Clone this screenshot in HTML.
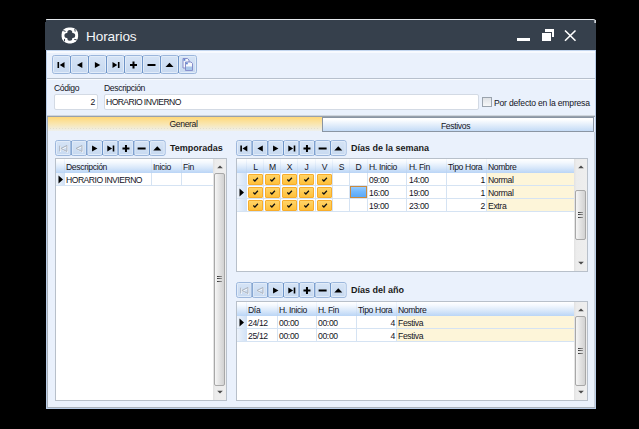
<!DOCTYPE html>
<html><head><meta charset="utf-8">
<style>
*{margin:0;padding:0;box-sizing:border-box}
html,body{width:639px;height:429px;overflow:hidden;background:#000}
body{position:relative;font-family:"Liberation Sans",sans-serif;font-size:8.6px;letter-spacing:-0.35px;color:#14141e}
.a{position:absolute}
.l{position:absolute;white-space:nowrap;line-height:10px}
.b{font-weight:bold;font-size:9px;letter-spacing:0;color:#1a1a1a}
.inp{position:absolute;background:#fff;border:1px solid #d3dae4;border-radius:2px}
.hd{position:absolute;background:linear-gradient(#ffffff 0%,#f3f8fe 25%,#d9e8fa 62%,#bad5f6 100%)}
.vl{position:absolute;width:1px;background:#d5e3f3}
.hl{position:absolute;height:1px;background:#d5e3f3}
</style></head><body>

<div class="a" style="left:46px;top:20px;width:550px;height:389px;background:#eaf1fc;border:1px solid #b9cde8;border-top:none"></div>
<div class="a" style="left:45px;top:19px;width:551px;height:31px;background:#36404c;border-top:1px solid #e4e8ec;border-radius:2px 3px 0 0"></div>
<div class="a" style="left:45px;top:19px;width:1px;height:3px;background:#000"></div>
<div class="a" style="left:594px;top:20px;width:2px;height:3px;background:linear-gradient(90deg,#8a929c,#e4e8ec)"></div>
<svg class="a" style="left:60px;top:26px" width="20" height="19" viewBox="0 0 20 19"><rect x="1.6" y="1.4" width="16.5" height="16" rx="7" fill="#fff"/><path d="M6.9 9.4H12.7M9.8 6.5V12.3" stroke="#37404c" stroke-width="5" stroke-linecap="round"/><path d="M3.2 4.6L5.6 5.4M14.8 3.0L15.2 5.6M4.4 15.4L4.6 12.9M16.6 13.8L14.2 13.4" stroke="#37404c" stroke-width="1"/></svg>
<div class="l" style="left:86px;top:29px;font-size:13.6px;line-height:16px;letter-spacing:-0.1px;color:#f4f6f8">Horarios</div>
<div class="a" style="left:517px;top:38px;width:13px;height:3px;background:#fff"></div>
<div class="a" style="left:545px;top:29px;width:9px;height:8px;background:#fff"></div>
<div class="a" style="left:541px;top:32px;width:11px;height:10px;background:#37404c"></div>
<div class="a" style="left:542px;top:33px;width:9px;height:8px;background:#fff"></div>
<svg class="a" style="left:563px;top:29px" width="14" height="13" viewBox="0 0 14 13"><path d="M2 1.5L12.5 11.8M12.5 1.5L2 11.8" stroke="#fff" stroke-width="1.6"/></svg>
<div class="a" style="left:47px;top:50px;width:548px;height:1px;background:#c3d6ef"></div>
<div class="a" style="left:47px;top:51px;width:548px;height:2px;background:#f7faff"></div>
<svg class="a" style="left:52px;top:55px" width="145" height="19" viewBox="0 0 145 19">
<defs><linearGradient id="g52_55" x1="0" y1="0" x2="0" y2="1"><stop offset="0" stop-color="#d6e4f6"/><stop offset="1" stop-color="#c7d9f0"/></linearGradient></defs>
<rect x="0.5" y="0.5" width="18" height="18" rx="2" fill="url(#g52_55)" stroke="#9cb7dc"/>
<rect x="1.5" y="1.5" width="16" height="16" rx="1" fill="none" stroke="#e2ecf9" stroke-width="1"/>
<rect x="18.5" y="0.5" width="18" height="18" rx="2" fill="url(#g52_55)" stroke="#9cb7dc"/>
<rect x="19.5" y="1.5" width="16" height="16" rx="1" fill="none" stroke="#e2ecf9" stroke-width="1"/>
<rect x="36.5" y="0.5" width="18" height="18" rx="2" fill="url(#g52_55)" stroke="#9cb7dc"/>
<rect x="37.5" y="1.5" width="16" height="16" rx="1" fill="none" stroke="#e2ecf9" stroke-width="1"/>
<rect x="54.5" y="0.5" width="18" height="18" rx="2" fill="url(#g52_55)" stroke="#9cb7dc"/>
<rect x="55.5" y="1.5" width="16" height="16" rx="1" fill="none" stroke="#e2ecf9" stroke-width="1"/>
<rect x="72.5" y="0.5" width="18" height="18" rx="2" fill="url(#g52_55)" stroke="#9cb7dc"/>
<rect x="73.5" y="1.5" width="16" height="16" rx="1" fill="none" stroke="#e2ecf9" stroke-width="1"/>
<rect x="90.5" y="0.5" width="18" height="18" rx="2" fill="url(#g52_55)" stroke="#9cb7dc"/>
<rect x="91.5" y="1.5" width="16" height="16" rx="1" fill="none" stroke="#e2ecf9" stroke-width="1"/>
<rect x="108.5" y="0.5" width="18" height="18" rx="2" fill="url(#g52_55)" stroke="#9cb7dc"/>
<rect x="109.5" y="1.5" width="16" height="16" rx="1" fill="none" stroke="#e2ecf9" stroke-width="1"/>
<rect x="126.5" y="0.5" width="18" height="18" rx="2" fill="url(#g52_55)" stroke="#9cb7dc"/>
<rect x="127.5" y="1.5" width="16" height="16" rx="1" fill="none" stroke="#e2ecf9" stroke-width="1"/>
<rect x="18" y="1" width="1" height="17" fill="#6f95c8"/>
<rect x="36" y="1" width="1" height="17" fill="#6f95c8"/>
<rect x="54" y="1" width="1" height="17" fill="#6f95c8"/>
<rect x="72" y="1" width="1" height="17" fill="#6f95c8"/>
<rect x="90" y="1" width="1" height="17" fill="#6f95c8"/>
<rect x="108" y="1" width="1" height="17" fill="#6f95c8"/>
<rect x="126" y="1" width="1" height="17" fill="#6f95c8"/>
<rect x="5.5" y="7.0" width="1.6" height="6" fill="#000"/><path d="M12.5 7.0L7.7 10.0L12.5 13.0Z" fill="#000"/>
<path d="M30.3 7.0L24.9 10.0L30.3 13.0Z" fill="#000"/>
<path d="M42.9 7.0L48.3 10.0L42.9 13.0Z" fill="#000"/>
<rect x="65.9" y="7.0" width="1.6" height="6" fill="#000"/><path d="M60.5 7.0L65.3 10.0L60.5 13.0Z" fill="#000"/>
<rect x="78.0" y="9.0" width="7" height="2" fill="#000"/><rect x="80.5" y="6.5" width="2" height="7" fill="#000"/>
<rect x="95.5" y="9.0" width="8" height="2" fill="#000"/>
<path d="M113.5 12.0L117.5 7.8L121.5 12.0Z" fill="#000"/>
<path d="M131.0 3.5H135.5 L137.0 5.0V13.0H131.0Z" fill="#f2f6fc" stroke="#7c82c4" stroke-width="0.9"/><rect x="131.5" y="4.0" width="1.8" height="1.8" fill="#5f86d0"/><path d="M133.5 7.0H139.0L140.5 8.5V15.5H133.5Z" fill="#f7f9fd" stroke="#7c82c4" stroke-width="0.9"/><rect x="134.0" y="11.5" width="6" height="3.6" fill="#a8c6ea"/><rect x="134.0" y="7.5" width="1.8" height="1.8" fill="#5f86d0"/>
</svg>
<div class="a" style="left:47px;top:78px;width:548px;height:1px;background:#b7c0cc"></div>
<div class="a" style="left:47px;top:79px;width:548px;height:1px;background:#f8fbff"></div>
<div class="l" style="left:54px;top:83px">Código</div>
<div class="l" style="left:104px;top:83px">Descripción</div>
<div class="inp" style="left:54px;top:94px;width:44px;height:16px"></div>
<div class="l" style="left:54px;top:97px;width:41px;text-align:right">2</div>
<div class="inp" style="left:104px;top:94px;width:375px;height:16px"></div>
<div class="l" style="left:106px;top:97px;letter-spacing:-0.58px">HORARIO INVIERNO</div>
<div class="a" style="left:482px;top:97px;width:10px;height:10px;background:linear-gradient(#dfe2e6,#f6f7f8);border:1px solid #9aa3ad"></div>
<div class="l" style="left:494px;top:98px;letter-spacing:-0.2px">Por defecto en la empresa</div>
<div class="a" style="left:47px;top:115px;width:548px;height:1px;background:#cfd5dc"></div>
<div class="a" style="left:47px;top:116px;width:548px;height:1px;background:#98a1ac"></div>
<div class="a" style="left:47px;top:117px;width:275px;height:14px;background:linear-gradient(#ffd87a,#f9e6b0 50%,#eef0ee 100%)"></div>
<div class="a" style="left:322px;top:117px;width:272px;height:15px;background:linear-gradient(#ffffff 10%,#c4dbf6);border:1px solid #8a95a3"></div>
<div class="l" style="left:46px;top:119px;width:275px;text-align:center">General</div>
<div class="a" style="left:50px;top:128px;width:269px;height:1px;background:repeating-linear-gradient(90deg,#e4dfcc 0 1px,transparent 1px 3px)"></div>
<div class="l" style="left:319px;top:121px;width:273px;text-align:center">Festivos</div>
<div class="a" style="left:47px;top:117px;width:1px;height:290px;background:#a9b1ba"></div>
<div class="a" style="left:594px;top:132px;width:1px;height:275px;background:#c9d0d8"></div>
<svg class="a" style="left:55px;top:140px" width="110.62" height="16" viewBox="0 0 110.62 16">
<defs><linearGradient id="g55_140" x1="0" y1="0" x2="0" y2="1"><stop offset="0" stop-color="#d6e4f6"/><stop offset="1" stop-color="#c7d9f0"/></linearGradient></defs>
<rect x="0.5" y="0.5" width="15.66" height="15" rx="2" fill="url(#g55_140)" stroke="#9cb7dc"/>
<rect x="1.5" y="1.5" width="13.66" height="13" rx="1" fill="none" stroke="#e2ecf9" stroke-width="1"/>
<rect x="16.16" y="0.5" width="15.66" height="15" rx="2" fill="url(#g55_140)" stroke="#9cb7dc"/>
<rect x="17.16" y="1.5" width="13.66" height="13" rx="1" fill="none" stroke="#e2ecf9" stroke-width="1"/>
<rect x="31.82" y="0.5" width="15.66" height="15" rx="2" fill="url(#g55_140)" stroke="#9cb7dc"/>
<rect x="32.82" y="1.5" width="13.66" height="13" rx="1" fill="none" stroke="#e2ecf9" stroke-width="1"/>
<rect x="47.480000000000004" y="0.5" width="15.66" height="15" rx="2" fill="url(#g55_140)" stroke="#9cb7dc"/>
<rect x="48.480000000000004" y="1.5" width="13.66" height="13" rx="1" fill="none" stroke="#e2ecf9" stroke-width="1"/>
<rect x="63.14" y="0.5" width="15.66" height="15" rx="2" fill="url(#g55_140)" stroke="#9cb7dc"/>
<rect x="64.14" y="1.5" width="13.66" height="13" rx="1" fill="none" stroke="#e2ecf9" stroke-width="1"/>
<rect x="78.8" y="0.5" width="15.66" height="15" rx="2" fill="url(#g55_140)" stroke="#9cb7dc"/>
<rect x="79.8" y="1.5" width="13.66" height="13" rx="1" fill="none" stroke="#e2ecf9" stroke-width="1"/>
<rect x="94.46000000000001" y="0.5" width="15.66" height="15" rx="2" fill="url(#g55_140)" stroke="#9cb7dc"/>
<rect x="95.46000000000001" y="1.5" width="13.66" height="13" rx="1" fill="none" stroke="#e2ecf9" stroke-width="1"/>
<rect x="15.66" y="1" width="1" height="14" fill="#6f95c8"/>
<rect x="31.32" y="1" width="1" height="14" fill="#6f95c8"/>
<rect x="46.980000000000004" y="1" width="1" height="14" fill="#6f95c8"/>
<rect x="62.64" y="1" width="1" height="14" fill="#6f95c8"/>
<rect x="78.3" y="1" width="1" height="14" fill="#6f95c8"/>
<rect x="93.96000000000001" y="1" width="1" height="14" fill="#6f95c8"/>
<path d="M4.73 5.7v5.6M11.93 5.5L5.93 8.5L11.93 11.5Z" transform="translate(0.7,0.7)" stroke="#fdfeff" stroke-width="1" fill="none"/><path d="M4.73 5.7v5.6M11.93 5.5L5.93 8.5L11.93 11.5Z" stroke="#a9b1bc" stroke-width="1" fill="none"/>
<path d="M26.990000000000002 5.5L20.990000000000002 8.5L26.990000000000002 11.5Z" transform="translate(0.7,0.7)" stroke="#fdfeff" stroke-width="1" fill="none"/><path d="M26.990000000000002 5.5L20.990000000000002 8.5L26.990000000000002 11.5Z" stroke="#a9b1bc" stroke-width="1" fill="none"/>
<path d="M37.05 5.5L42.449999999999996 8.5L37.05 11.5Z" fill="#000"/>
<rect x="57.71" y="5.5" width="1.6" height="6" fill="#000"/><path d="M52.31 5.5L57.11 8.5L52.31 11.5Z" fill="#000"/>
<rect x="67.47" y="7.5" width="7" height="2" fill="#000"/><rect x="69.97" y="5.0" width="2" height="7" fill="#000"/>
<rect x="82.63" y="7.5" width="8" height="2" fill="#000"/>
<path d="M98.29 10.5L102.29 6.3L106.29 10.5Z" fill="#000"/>
</svg>
<div class="l b" style="left:170px;top:143px">Temporadas</div>
<div class="a" style="left:55px;top:158px;width:172px;height:243px;background:#fff;border:1px solid #b8c0ca"></div>
<div class="hd" style="left:56px;top:159px;width:157px;height:14px"></div>
<div class="a" style="left:64px;top:159px;width:1px;height:14px;background:linear-gradient(#f4f8fe,#b9d2f0)"></div>
<div class="a" style="left:151px;top:159px;width:1px;height:14px;background:linear-gradient(#f4f8fe,#b9d2f0)"></div>
<div class="a" style="left:181px;top:159px;width:1px;height:14px;background:linear-gradient(#f4f8fe,#b9d2f0)"></div>
<div class="a" style="left:56px;top:173px;width:9px;height:13px;background:linear-gradient(90deg,#edf3fb,#d0e1f6)"></div>
<div class="a" style="left:151px;top:173px;width:1px;height:13px;background:#d5e3f3"></div>
<div class="a" style="left:181px;top:173px;width:1px;height:13px;background:#d5e3f3"></div>
<div class="a" style="left:56px;top:185px;width:157px;height:1px;background:#d5e3f3"></div>
<svg class="a" style="left:58px;top:175px" width="6" height="9" viewBox="0 0 6 9"><path d="M0.5 0.5L5 4.5L0.5 8.5Z" fill="#000"/></svg>
<div class="l" style="left:66px;top:162px;">Descripción</div>
<div class="l" style="left:153px;top:162px;">Inicio</div>
<div class="l" style="left:183px;top:162px;">Fin</div>
<div class="l" style="left:66px;top:175px;letter-spacing:-0.5px">HORARIO INVIERNO</div>
<div class="a" style="left:213px;top:159px;width:13px;height:241px;background:linear-gradient(90deg,#e2e2e2,#ececec 20%,#eeeeee)"></div>
<svg class="a" style="left:213px;top:159px" width="13" height="241" viewBox="0 0 13 241"><path d="M4.2 9.2L7.0 6.4L9.8 9.2Z" fill="#4a4a4a"/><path d="M4.2 231.8L7.0 234.6L9.8 231.8Z" fill="#4a4a4a"/></svg>
<div class="a" style="left:214px;top:173px;width:11px;height:213px;border:1px solid #a8a8a8;border-radius:2px;background:linear-gradient(90deg,#f6f6f6,#e4e4e4 45%,#d2d2d2)"></div>
<div class="a" style="left:217px;top:276px;width:5px;height:1px;background:linear-gradient(90deg,#333,#999)"></div>
<div class="a" style="left:217px;top:278px;width:5px;height:1px;background:linear-gradient(90deg,#333,#999)"></div>
<div class="a" style="left:217px;top:281px;width:5px;height:1px;background:linear-gradient(90deg,#333,#999)"></div>
<svg class="a" style="left:236px;top:140px" width="110.62" height="16" viewBox="0 0 110.62 16">
<defs><linearGradient id="g236_140" x1="0" y1="0" x2="0" y2="1"><stop offset="0" stop-color="#d6e4f6"/><stop offset="1" stop-color="#c7d9f0"/></linearGradient></defs>
<rect x="0.5" y="0.5" width="15.66" height="15" rx="2" fill="url(#g236_140)" stroke="#9cb7dc"/>
<rect x="1.5" y="1.5" width="13.66" height="13" rx="1" fill="none" stroke="#e2ecf9" stroke-width="1"/>
<rect x="16.16" y="0.5" width="15.66" height="15" rx="2" fill="url(#g236_140)" stroke="#9cb7dc"/>
<rect x="17.16" y="1.5" width="13.66" height="13" rx="1" fill="none" stroke="#e2ecf9" stroke-width="1"/>
<rect x="31.82" y="0.5" width="15.66" height="15" rx="2" fill="url(#g236_140)" stroke="#9cb7dc"/>
<rect x="32.82" y="1.5" width="13.66" height="13" rx="1" fill="none" stroke="#e2ecf9" stroke-width="1"/>
<rect x="47.480000000000004" y="0.5" width="15.66" height="15" rx="2" fill="url(#g236_140)" stroke="#9cb7dc"/>
<rect x="48.480000000000004" y="1.5" width="13.66" height="13" rx="1" fill="none" stroke="#e2ecf9" stroke-width="1"/>
<rect x="63.14" y="0.5" width="15.66" height="15" rx="2" fill="url(#g236_140)" stroke="#9cb7dc"/>
<rect x="64.14" y="1.5" width="13.66" height="13" rx="1" fill="none" stroke="#e2ecf9" stroke-width="1"/>
<rect x="78.8" y="0.5" width="15.66" height="15" rx="2" fill="url(#g236_140)" stroke="#9cb7dc"/>
<rect x="79.8" y="1.5" width="13.66" height="13" rx="1" fill="none" stroke="#e2ecf9" stroke-width="1"/>
<rect x="94.46000000000001" y="0.5" width="15.66" height="15" rx="2" fill="url(#g236_140)" stroke="#9cb7dc"/>
<rect x="95.46000000000001" y="1.5" width="13.66" height="13" rx="1" fill="none" stroke="#e2ecf9" stroke-width="1"/>
<rect x="15.66" y="1" width="1" height="14" fill="#6f95c8"/>
<rect x="31.32" y="1" width="1" height="14" fill="#6f95c8"/>
<rect x="46.980000000000004" y="1" width="1" height="14" fill="#6f95c8"/>
<rect x="62.64" y="1" width="1" height="14" fill="#6f95c8"/>
<rect x="78.3" y="1" width="1" height="14" fill="#6f95c8"/>
<rect x="93.96000000000001" y="1" width="1" height="14" fill="#6f95c8"/>
<rect x="4.33" y="5.5" width="1.6" height="6" fill="#000"/><path d="M11.33 5.5L6.53 8.5L11.33 11.5Z" fill="#000"/>
<path d="M26.790000000000003 5.5L21.39 8.5L26.790000000000003 11.5Z" fill="#000"/>
<path d="M37.05 5.5L42.449999999999996 8.5L37.05 11.5Z" fill="#000"/>
<rect x="57.71" y="5.5" width="1.6" height="6" fill="#000"/><path d="M52.31 5.5L57.11 8.5L52.31 11.5Z" fill="#000"/>
<rect x="67.47" y="7.5" width="7" height="2" fill="#000"/><rect x="69.97" y="5.0" width="2" height="7" fill="#000"/>
<rect x="82.63" y="7.5" width="8" height="2" fill="#000"/>
<path d="M98.29 10.5L102.29 6.3L106.29 10.5Z" fill="#000"/>
</svg>
<div class="l b" style="left:351px;top:143px">Días de la semana</div>
<div class="a" style="left:236px;top:158px;width:352px;height:114px;background:#fff;border:1px solid #b8c0ca"></div>
<div class="hd" style="left:237px;top:159px;width:337px;height:14px"></div>
<div class="a" style="left:246px;top:159px;width:1px;height:14px;background:linear-gradient(#f4f8fe,#b9d2f0)"></div>
<div class="a" style="left:263px;top:159px;width:1px;height:14px;background:linear-gradient(#f4f8fe,#b9d2f0)"></div>
<div class="a" style="left:280px;top:159px;width:1px;height:14px;background:linear-gradient(#f4f8fe,#b9d2f0)"></div>
<div class="a" style="left:297px;top:159px;width:1px;height:14px;background:linear-gradient(#f4f8fe,#b9d2f0)"></div>
<div class="a" style="left:315px;top:159px;width:1px;height:14px;background:linear-gradient(#f4f8fe,#b9d2f0)"></div>
<div class="a" style="left:332px;top:159px;width:1px;height:14px;background:linear-gradient(#f4f8fe,#b9d2f0)"></div>
<div class="a" style="left:349px;top:159px;width:1px;height:14px;background:linear-gradient(#f4f8fe,#b9d2f0)"></div>
<div class="a" style="left:367px;top:159px;width:1px;height:14px;background:linear-gradient(#f4f8fe,#b9d2f0)"></div>
<div class="a" style="left:406px;top:159px;width:1px;height:14px;background:linear-gradient(#f4f8fe,#b9d2f0)"></div>
<div class="a" style="left:446px;top:159px;width:1px;height:14px;background:linear-gradient(#f4f8fe,#b9d2f0)"></div>
<div class="a" style="left:486px;top:159px;width:1px;height:14px;background:linear-gradient(#f4f8fe,#b9d2f0)"></div>
<div class="a" style="left:237px;top:173px;width:10px;height:39px;background:linear-gradient(90deg,#edf3fb,#d0e1f6)"></div>
<div class="a" style="left:486px;top:173px;width:88px;height:39px;background:#fdf5d9"></div>
<div class="a" style="left:263px;top:173px;width:1px;height:39px;background:#d5e3f3"></div>
<div class="a" style="left:280px;top:173px;width:1px;height:39px;background:#d5e3f3"></div>
<div class="a" style="left:297px;top:173px;width:1px;height:39px;background:#d5e3f3"></div>
<div class="a" style="left:315px;top:173px;width:1px;height:39px;background:#d5e3f3"></div>
<div class="a" style="left:332px;top:173px;width:1px;height:39px;background:#d5e3f3"></div>
<div class="a" style="left:349px;top:173px;width:1px;height:39px;background:#d5e3f3"></div>
<div class="a" style="left:367px;top:173px;width:1px;height:39px;background:#d5e3f3"></div>
<div class="a" style="left:406px;top:173px;width:1px;height:39px;background:#d5e3f3"></div>
<div class="a" style="left:446px;top:173px;width:1px;height:39px;background:#d5e3f3"></div>
<div class="a" style="left:486px;top:173px;width:1px;height:39px;background:#d5e3f3"></div>
<div class="a" style="left:237px;top:185px;width:337px;height:1px;background:#d5e3f3"></div>
<div class="a" style="left:237px;top:198px;width:337px;height:1px;background:#d5e3f3"></div>
<div class="a" style="left:237px;top:211px;width:337px;height:1px;background:#d5e3f3"></div>
<div class="l" style="left:247px;top:162px;width:17px;text-align:center">L</div>
<div class="l" style="left:264px;top:162px;width:17px;text-align:center">M</div>
<div class="l" style="left:281px;top:162px;width:17px;text-align:center">X</div>
<div class="l" style="left:298px;top:162px;width:17px;text-align:center">J</div>
<div class="l" style="left:316px;top:162px;width:17px;text-align:center">V</div>
<div class="l" style="left:333px;top:162px;width:17px;text-align:center">S</div>
<div class="l" style="left:350px;top:162px;width:17px;text-align:center">D</div>
<div class="l" style="left:369px;top:162px;">H. Inicio</div>
<div class="l" style="left:409px;top:162px;">H. Fin</div>
<div class="l" style="left:448px;top:162px;">Tipo Hora</div>
<div class="l" style="left:488px;top:162px;">Nombre</div>
<div class="a" style="left:248px;top:174px;width:15px;height:11px;border:1px solid #f7ad2c;border-radius:1px;background:linear-gradient(#ffd468,#ffc03a)"></div>
<svg class="a" style="left:252px;top:176px" width="7" height="7" viewBox="0 0 7 7"><path d="M1.3 3.5L2.9 5L5.9 1.8" stroke="#111" stroke-width="1.25" fill="none"/></svg>
<div class="a" style="left:265px;top:174px;width:15px;height:11px;border:1px solid #f7ad2c;border-radius:1px;background:linear-gradient(#ffd468,#ffc03a)"></div>
<svg class="a" style="left:269px;top:176px" width="7" height="7" viewBox="0 0 7 7"><path d="M1.3 3.5L2.9 5L5.9 1.8" stroke="#111" stroke-width="1.25" fill="none"/></svg>
<div class="a" style="left:282px;top:174px;width:15px;height:11px;border:1px solid #f7ad2c;border-radius:1px;background:linear-gradient(#ffd468,#ffc03a)"></div>
<svg class="a" style="left:286px;top:176px" width="7" height="7" viewBox="0 0 7 7"><path d="M1.3 3.5L2.9 5L5.9 1.8" stroke="#111" stroke-width="1.25" fill="none"/></svg>
<div class="a" style="left:299px;top:174px;width:15px;height:11px;border:1px solid #f7ad2c;border-radius:1px;background:linear-gradient(#ffd468,#ffc03a)"></div>
<svg class="a" style="left:303px;top:176px" width="7" height="7" viewBox="0 0 7 7"><path d="M1.3 3.5L2.9 5L5.9 1.8" stroke="#111" stroke-width="1.25" fill="none"/></svg>
<div class="a" style="left:317px;top:174px;width:15px;height:11px;border:1px solid #f7ad2c;border-radius:1px;background:linear-gradient(#ffd468,#ffc03a)"></div>
<svg class="a" style="left:321px;top:176px" width="7" height="7" viewBox="0 0 7 7"><path d="M1.3 3.5L2.9 5L5.9 1.8" stroke="#111" stroke-width="1.25" fill="none"/></svg>
<div class="l" style="left:369px;top:175px;">09:00</div>
<div class="l" style="left:409px;top:175px;">14:00</div>
<div class="l" style="left:425px;top:175px;width:60px;text-align:right;">1</div>
<div class="l" style="left:488px;top:175px;">Normal</div>
<div class="a" style="left:248px;top:187px;width:15px;height:11px;border:1px solid #f7ad2c;border-radius:1px;background:linear-gradient(#ffd468,#ffc03a)"></div>
<svg class="a" style="left:252px;top:189px" width="7" height="7" viewBox="0 0 7 7"><path d="M1.3 3.5L2.9 5L5.9 1.8" stroke="#111" stroke-width="1.25" fill="none"/></svg>
<div class="a" style="left:265px;top:187px;width:15px;height:11px;border:1px solid #f7ad2c;border-radius:1px;background:linear-gradient(#ffd468,#ffc03a)"></div>
<svg class="a" style="left:269px;top:189px" width="7" height="7" viewBox="0 0 7 7"><path d="M1.3 3.5L2.9 5L5.9 1.8" stroke="#111" stroke-width="1.25" fill="none"/></svg>
<div class="a" style="left:282px;top:187px;width:15px;height:11px;border:1px solid #f7ad2c;border-radius:1px;background:linear-gradient(#ffd468,#ffc03a)"></div>
<svg class="a" style="left:286px;top:189px" width="7" height="7" viewBox="0 0 7 7"><path d="M1.3 3.5L2.9 5L5.9 1.8" stroke="#111" stroke-width="1.25" fill="none"/></svg>
<div class="a" style="left:299px;top:187px;width:15px;height:11px;border:1px solid #f7ad2c;border-radius:1px;background:linear-gradient(#ffd468,#ffc03a)"></div>
<svg class="a" style="left:303px;top:189px" width="7" height="7" viewBox="0 0 7 7"><path d="M1.3 3.5L2.9 5L5.9 1.8" stroke="#111" stroke-width="1.25" fill="none"/></svg>
<div class="a" style="left:317px;top:187px;width:15px;height:11px;border:1px solid #f7ad2c;border-radius:1px;background:linear-gradient(#ffd468,#ffc03a)"></div>
<svg class="a" style="left:321px;top:189px" width="7" height="7" viewBox="0 0 7 7"><path d="M1.3 3.5L2.9 5L5.9 1.8" stroke="#111" stroke-width="1.25" fill="none"/></svg>
<div class="l" style="left:369px;top:188px;">16:00</div>
<div class="l" style="left:409px;top:188px;">19:00</div>
<div class="l" style="left:425px;top:188px;width:60px;text-align:right;">1</div>
<div class="l" style="left:488px;top:188px;">Normal</div>
<div class="a" style="left:248px;top:200px;width:15px;height:11px;border:1px solid #f7ad2c;border-radius:1px;background:linear-gradient(#ffd468,#ffc03a)"></div>
<svg class="a" style="left:252px;top:202px" width="7" height="7" viewBox="0 0 7 7"><path d="M1.3 3.5L2.9 5L5.9 1.8" stroke="#111" stroke-width="1.25" fill="none"/></svg>
<div class="a" style="left:265px;top:200px;width:15px;height:11px;border:1px solid #f7ad2c;border-radius:1px;background:linear-gradient(#ffd468,#ffc03a)"></div>
<svg class="a" style="left:269px;top:202px" width="7" height="7" viewBox="0 0 7 7"><path d="M1.3 3.5L2.9 5L5.9 1.8" stroke="#111" stroke-width="1.25" fill="none"/></svg>
<div class="a" style="left:282px;top:200px;width:15px;height:11px;border:1px solid #f7ad2c;border-radius:1px;background:linear-gradient(#ffd468,#ffc03a)"></div>
<svg class="a" style="left:286px;top:202px" width="7" height="7" viewBox="0 0 7 7"><path d="M1.3 3.5L2.9 5L5.9 1.8" stroke="#111" stroke-width="1.25" fill="none"/></svg>
<div class="a" style="left:299px;top:200px;width:15px;height:11px;border:1px solid #f7ad2c;border-radius:1px;background:linear-gradient(#ffd468,#ffc03a)"></div>
<svg class="a" style="left:303px;top:202px" width="7" height="7" viewBox="0 0 7 7"><path d="M1.3 3.5L2.9 5L5.9 1.8" stroke="#111" stroke-width="1.25" fill="none"/></svg>
<div class="a" style="left:317px;top:200px;width:15px;height:11px;border:1px solid #f7ad2c;border-radius:1px;background:linear-gradient(#ffd468,#ffc03a)"></div>
<svg class="a" style="left:321px;top:202px" width="7" height="7" viewBox="0 0 7 7"><path d="M1.3 3.5L2.9 5L5.9 1.8" stroke="#111" stroke-width="1.25" fill="none"/></svg>
<div class="l" style="left:369px;top:201px;">19:00</div>
<div class="l" style="left:409px;top:201px;">23:00</div>
<div class="l" style="left:425px;top:201px;width:60px;text-align:right;">2</div>
<div class="l" style="left:488px;top:201px;">Extra</div>
<svg class="a" style="left:239px;top:188px" width="6" height="9" viewBox="0 0 6 9"><path d="M0.5 0.5L5 4.5L0.5 8.5Z" fill="#000"/></svg>
<div class="a" style="left:350px;top:186px;width:17px;height:12px;border:1px solid #c98a3e;background:linear-gradient(#93cbff,#72b8fd 45%,#5aa9f7)"></div>
<div class="a" style="left:574px;top:159px;width:13px;height:112px;background:linear-gradient(90deg,#e2e2e2,#ececec 20%,#eeeeee)"></div>
<svg class="a" style="left:574px;top:159px" width="13" height="112" viewBox="0 0 13 112"><path d="M4.2 9.2L7.0 6.4L9.8 9.2Z" fill="#4a4a4a"/><path d="M4.2 102.8L7.0 105.6L9.8 102.8Z" fill="#4a4a4a"/></svg>
<div class="a" style="left:575px;top:190px;width:11px;height:50px;border:1px solid #a8a8a8;border-radius:2px;background:linear-gradient(90deg,#f6f6f6,#e4e4e4 45%,#d2d2d2)"></div>
<div class="a" style="left:578px;top:212px;width:5px;height:1px;background:linear-gradient(90deg,#333,#999)"></div>
<div class="a" style="left:578px;top:214px;width:5px;height:1px;background:linear-gradient(90deg,#333,#999)"></div>
<div class="a" style="left:578px;top:217px;width:5px;height:1px;background:linear-gradient(90deg,#333,#999)"></div>
<svg class="a" style="left:236px;top:282px" width="110.62" height="16" viewBox="0 0 110.62 16">
<defs><linearGradient id="g236_282" x1="0" y1="0" x2="0" y2="1"><stop offset="0" stop-color="#d6e4f6"/><stop offset="1" stop-color="#c7d9f0"/></linearGradient></defs>
<rect x="0.5" y="0.5" width="15.66" height="15" rx="2" fill="url(#g236_282)" stroke="#9cb7dc"/>
<rect x="1.5" y="1.5" width="13.66" height="13" rx="1" fill="none" stroke="#e2ecf9" stroke-width="1"/>
<rect x="16.16" y="0.5" width="15.66" height="15" rx="2" fill="url(#g236_282)" stroke="#9cb7dc"/>
<rect x="17.16" y="1.5" width="13.66" height="13" rx="1" fill="none" stroke="#e2ecf9" stroke-width="1"/>
<rect x="31.82" y="0.5" width="15.66" height="15" rx="2" fill="url(#g236_282)" stroke="#9cb7dc"/>
<rect x="32.82" y="1.5" width="13.66" height="13" rx="1" fill="none" stroke="#e2ecf9" stroke-width="1"/>
<rect x="47.480000000000004" y="0.5" width="15.66" height="15" rx="2" fill="url(#g236_282)" stroke="#9cb7dc"/>
<rect x="48.480000000000004" y="1.5" width="13.66" height="13" rx="1" fill="none" stroke="#e2ecf9" stroke-width="1"/>
<rect x="63.14" y="0.5" width="15.66" height="15" rx="2" fill="url(#g236_282)" stroke="#9cb7dc"/>
<rect x="64.14" y="1.5" width="13.66" height="13" rx="1" fill="none" stroke="#e2ecf9" stroke-width="1"/>
<rect x="78.8" y="0.5" width="15.66" height="15" rx="2" fill="url(#g236_282)" stroke="#9cb7dc"/>
<rect x="79.8" y="1.5" width="13.66" height="13" rx="1" fill="none" stroke="#e2ecf9" stroke-width="1"/>
<rect x="94.46000000000001" y="0.5" width="15.66" height="15" rx="2" fill="url(#g236_282)" stroke="#9cb7dc"/>
<rect x="95.46000000000001" y="1.5" width="13.66" height="13" rx="1" fill="none" stroke="#e2ecf9" stroke-width="1"/>
<rect x="15.66" y="1" width="1" height="14" fill="#6f95c8"/>
<rect x="31.32" y="1" width="1" height="14" fill="#6f95c8"/>
<rect x="46.980000000000004" y="1" width="1" height="14" fill="#6f95c8"/>
<rect x="62.64" y="1" width="1" height="14" fill="#6f95c8"/>
<rect x="78.3" y="1" width="1" height="14" fill="#6f95c8"/>
<rect x="93.96000000000001" y="1" width="1" height="14" fill="#6f95c8"/>
<path d="M4.73 5.7v5.6M11.93 5.5L5.93 8.5L11.93 11.5Z" transform="translate(0.7,0.7)" stroke="#fdfeff" stroke-width="1" fill="none"/><path d="M4.73 5.7v5.6M11.93 5.5L5.93 8.5L11.93 11.5Z" stroke="#a9b1bc" stroke-width="1" fill="none"/>
<path d="M26.990000000000002 5.5L20.990000000000002 8.5L26.990000000000002 11.5Z" transform="translate(0.7,0.7)" stroke="#fdfeff" stroke-width="1" fill="none"/><path d="M26.990000000000002 5.5L20.990000000000002 8.5L26.990000000000002 11.5Z" stroke="#a9b1bc" stroke-width="1" fill="none"/>
<path d="M37.05 5.5L42.449999999999996 8.5L37.05 11.5Z" fill="#000"/>
<rect x="57.71" y="5.5" width="1.6" height="6" fill="#000"/><path d="M52.31 5.5L57.11 8.5L52.31 11.5Z" fill="#000"/>
<rect x="67.47" y="7.5" width="7" height="2" fill="#000"/><rect x="69.97" y="5.0" width="2" height="7" fill="#000"/>
<rect x="82.63" y="7.5" width="8" height="2" fill="#000"/>
<path d="M98.29 10.5L102.29 6.3L106.29 10.5Z" fill="#000"/>
</svg>
<div class="l b" style="left:351px;top:285px">Días del año</div>
<div class="a" style="left:236px;top:301px;width:352px;height:100px;background:#fff;border:1px solid #b8c0ca"></div>
<div class="hd" style="left:237px;top:302px;width:337px;height:14px"></div>
<div class="a" style="left:246px;top:302px;width:1px;height:14px;background:linear-gradient(#f4f8fe,#b9d2f0)"></div>
<div class="a" style="left:277px;top:302px;width:1px;height:14px;background:linear-gradient(#f4f8fe,#b9d2f0)"></div>
<div class="a" style="left:316px;top:302px;width:1px;height:14px;background:linear-gradient(#f4f8fe,#b9d2f0)"></div>
<div class="a" style="left:356px;top:302px;width:1px;height:14px;background:linear-gradient(#f4f8fe,#b9d2f0)"></div>
<div class="a" style="left:396px;top:302px;width:1px;height:14px;background:linear-gradient(#f4f8fe,#b9d2f0)"></div>
<div class="a" style="left:237px;top:316px;width:10px;height:26px;background:linear-gradient(90deg,#edf3fb,#d0e1f6)"></div>
<div class="a" style="left:396px;top:316px;width:178px;height:26px;background:#fdf5d9"></div>
<div class="a" style="left:277px;top:316px;width:1px;height:26px;background:#d5e3f3"></div>
<div class="a" style="left:316px;top:316px;width:1px;height:26px;background:#d5e3f3"></div>
<div class="a" style="left:356px;top:316px;width:1px;height:26px;background:#d5e3f3"></div>
<div class="a" style="left:396px;top:316px;width:1px;height:26px;background:#d5e3f3"></div>
<div class="a" style="left:237px;top:328px;width:337px;height:1px;background:#d5e3f3"></div>
<div class="a" style="left:237px;top:341px;width:337px;height:1px;background:#d5e3f3"></div>
<div class="l" style="left:248px;top:305px;">Día</div>
<div class="l" style="left:279px;top:305px;">H. Inicio</div>
<div class="l" style="left:318px;top:305px;">H. Fin</div>
<div class="l" style="left:358px;top:305px;">Tipo Hora</div>
<div class="l" style="left:398px;top:305px;">Nombre</div>
<div class="l" style="left:248px;top:318px;">24/12</div>
<div class="l" style="left:279px;top:318px;">00:00</div>
<div class="l" style="left:318px;top:318px;">00:00</div>
<div class="l" style="left:335px;top:318px;width:60px;text-align:right;">4</div>
<div class="l" style="left:398px;top:318px;">Festiva</div>
<div class="l" style="left:248px;top:331px;">25/12</div>
<div class="l" style="left:279px;top:331px;">00:00</div>
<div class="l" style="left:318px;top:331px;">00:00</div>
<div class="l" style="left:335px;top:331px;width:60px;text-align:right;">4</div>
<div class="l" style="left:398px;top:331px;">Festiva</div>
<svg class="a" style="left:239px;top:318px" width="6" height="9" viewBox="0 0 6 9"><path d="M0.5 0.5L5 4.5L0.5 8.5Z" fill="#000"/></svg>
<div class="a" style="left:574px;top:302px;width:13px;height:98px;background:linear-gradient(90deg,#e2e2e2,#ececec 20%,#eeeeee)"></div>
<svg class="a" style="left:574px;top:302px" width="13" height="98" viewBox="0 0 13 98"><path d="M4.2 9.2L7.0 6.4L9.8 9.2Z" fill="#4a4a4a"/><path d="M4.2 88.8L7.0 91.6L9.8 88.8Z" fill="#4a4a4a"/></svg>
<div class="a" style="left:575px;top:316px;width:11px;height:70px;border:1px solid #a8a8a8;border-radius:2px;background:linear-gradient(90deg,#f6f6f6,#e4e4e4 45%,#d2d2d2)"></div>
<div class="a" style="left:578px;top:348px;width:5px;height:1px;background:linear-gradient(90deg,#333,#999)"></div>
<div class="a" style="left:578px;top:350px;width:5px;height:1px;background:linear-gradient(90deg,#333,#999)"></div>
<div class="a" style="left:578px;top:353px;width:5px;height:1px;background:linear-gradient(90deg,#333,#999)"></div>
<div class="a" style="left:47px;top:407px;width:548px;height:1px;background:#a9b0b9"></div>
</body></html>
